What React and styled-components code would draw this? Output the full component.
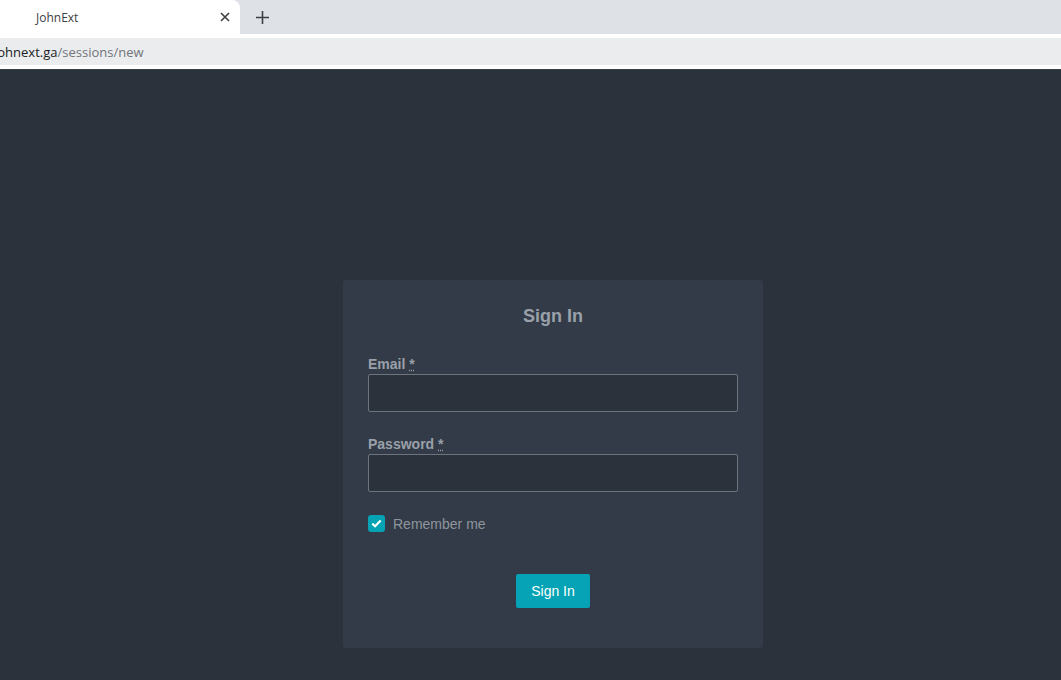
import React from "react";
import styled, { createGlobalStyle } from "styled-components";

const Global = createGlobalStyle`
  html, body {
    margin: 0;
    padding: 0;
    background: #2b323c;
    font-family: "Liberation Sans", Arial, sans-serif;
  }
  * { box-sizing: border-box; }
`;

const Chrome = styled.div`
  background: #dee1e6;
  height: 70px;
  display: flex;
  flex-direction: column;
  border-bottom: 1px solid #3a4049;
`;

const TabStrip = styled.div`
  height: 34px;
  display: flex;
  align-items: stretch;
`;

const Tab = styled.div`
  width: 240px;
  background: #ffffff;
  border-radius: 0 8px 0 0;
  display: flex;
  align-items: center;
  padding: 0 10px 0 36px;
  font-family: "Open Sans", "Noto Sans", sans-serif;
  font-size: 12px;
  color: #3c4043;
  .title {
    flex: 1;
  }
`;

const NewTab = styled.div`
  width: 44px;
  display: flex;
  align-items: center;
  justify-content: center;
`;

const Toolbar = styled.div`
  flex: 1;
  background: #ffffff;
  padding: 4px 0;
  display: flex;
`;

const Omnibox = styled.div`
  flex: 1;
  background: #ebecee;
  display: flex;
  align-items: center;
  margin-left: -6px;
  font-family: "Open Sans", "Noto Sans", sans-serif;
  font-size: 13px;
  color: #202124;
  span {
    color: #70757a;
  }
`;

const Page = styled.div`
  display: flex;
  justify-content: center;
  padding: 210px 0 0 45px;
`;

const Card = styled.div`
  width: 420px;
  background: #323b47;
  border-radius: 3px;
  padding: 25px 25px 40px;
`;

const Title = styled.h2`
  margin: 0 0 29px;
  text-align: center;
  font-size: 18px;
  font-weight: bold;
  color: #9aa0a9;
  line-height: 22px;
`;

const Field = styled.div`
  margin-bottom: 24px;
`;

const Label = styled.label`
  display: block;
  font-size: 14px;
  font-weight: bold;
  color: #9aa0a9;
  line-height: 16px;
  margin-bottom: 2px;
  abbr {
    text-decoration: underline dotted;
    cursor: help;
  }
`;

const Input = styled.input`
  display: block;
  width: 100%;
  height: 38px;
  background: #2b323b;
  border: 1px solid #6d747d;
  border-radius: 2px;
  color: #c8ccd2;
  font-size: 14px;
  padding: 0 10px;
  outline: none;
`;

const Check = styled.label`
  display: flex;
  align-items: center;
  gap: 8px;
  margin-top: -1px;
  font-size: 14px;
  color: #8f959d;
`;

const Box = styled.span`
  width: 17px;
  height: 17px;
  border-radius: 3px;
  background: #06a3b5;
  display: flex;
  align-items: center;
  justify-content: center;
`;

const Actions = styled.div`
  display: flex;
  justify-content: center;
  margin-top: 42px;
`;

const Button = styled.button`
  background: #05a3b5;
  border: none;
  border-radius: 2px;
  color: #ffffff;
  font-family: "Liberation Sans", Arial, sans-serif;
  font-size: 14px;
  height: 34px;
  padding: 0 15px;
  cursor: pointer;
`;

export default function App() {
  return (
    <>
      <Global />
      <Chrome>
        <TabStrip>
          <Tab>
            <span className="title">JohnExt</span>
            <svg width="10" height="10" viewBox="0 0 10 10">
              <path d="M1 1L9 9M9 1L1 9" stroke="#3c4043" strokeWidth="1.6" />
            </svg>
          </Tab>
          <NewTab>
            <svg width="13" height="13" viewBox="0 0 13 13">
              <path d="M6.5 0V13M0 6.5H13" stroke="#3c4043" strokeWidth="1.6" />
            </svg>
          </NewTab>
        </TabStrip>
        <Toolbar>
          <Omnibox>
            johnext.ga<span>/sessions/new</span>
          </Omnibox>
        </Toolbar>
      </Chrome>
      <Page>
        <Card>
          <Title>Sign In</Title>
          <Field>
            <Label>
              Email <abbr title="required">*</abbr>
            </Label>
            <Input type="email" />
          </Field>
          <Field>
            <Label>
              Password <abbr title="required">*</abbr>
            </Label>
            <Input type="password" />
          </Field>
          <Check>
            <Box>
              <svg width="11" height="9" viewBox="0 0 11 9">
                <path d="M1.3 4.6L4.1 7.3L9.7 1.6" stroke="#fff" strokeWidth="2.2" fill="none" />
              </svg>
            </Box>
            Remember me
          </Check>
          <Actions>
            <Button>Sign In</Button>
          </Actions>
        </Card>
      </Page>
    </>
  );
}
